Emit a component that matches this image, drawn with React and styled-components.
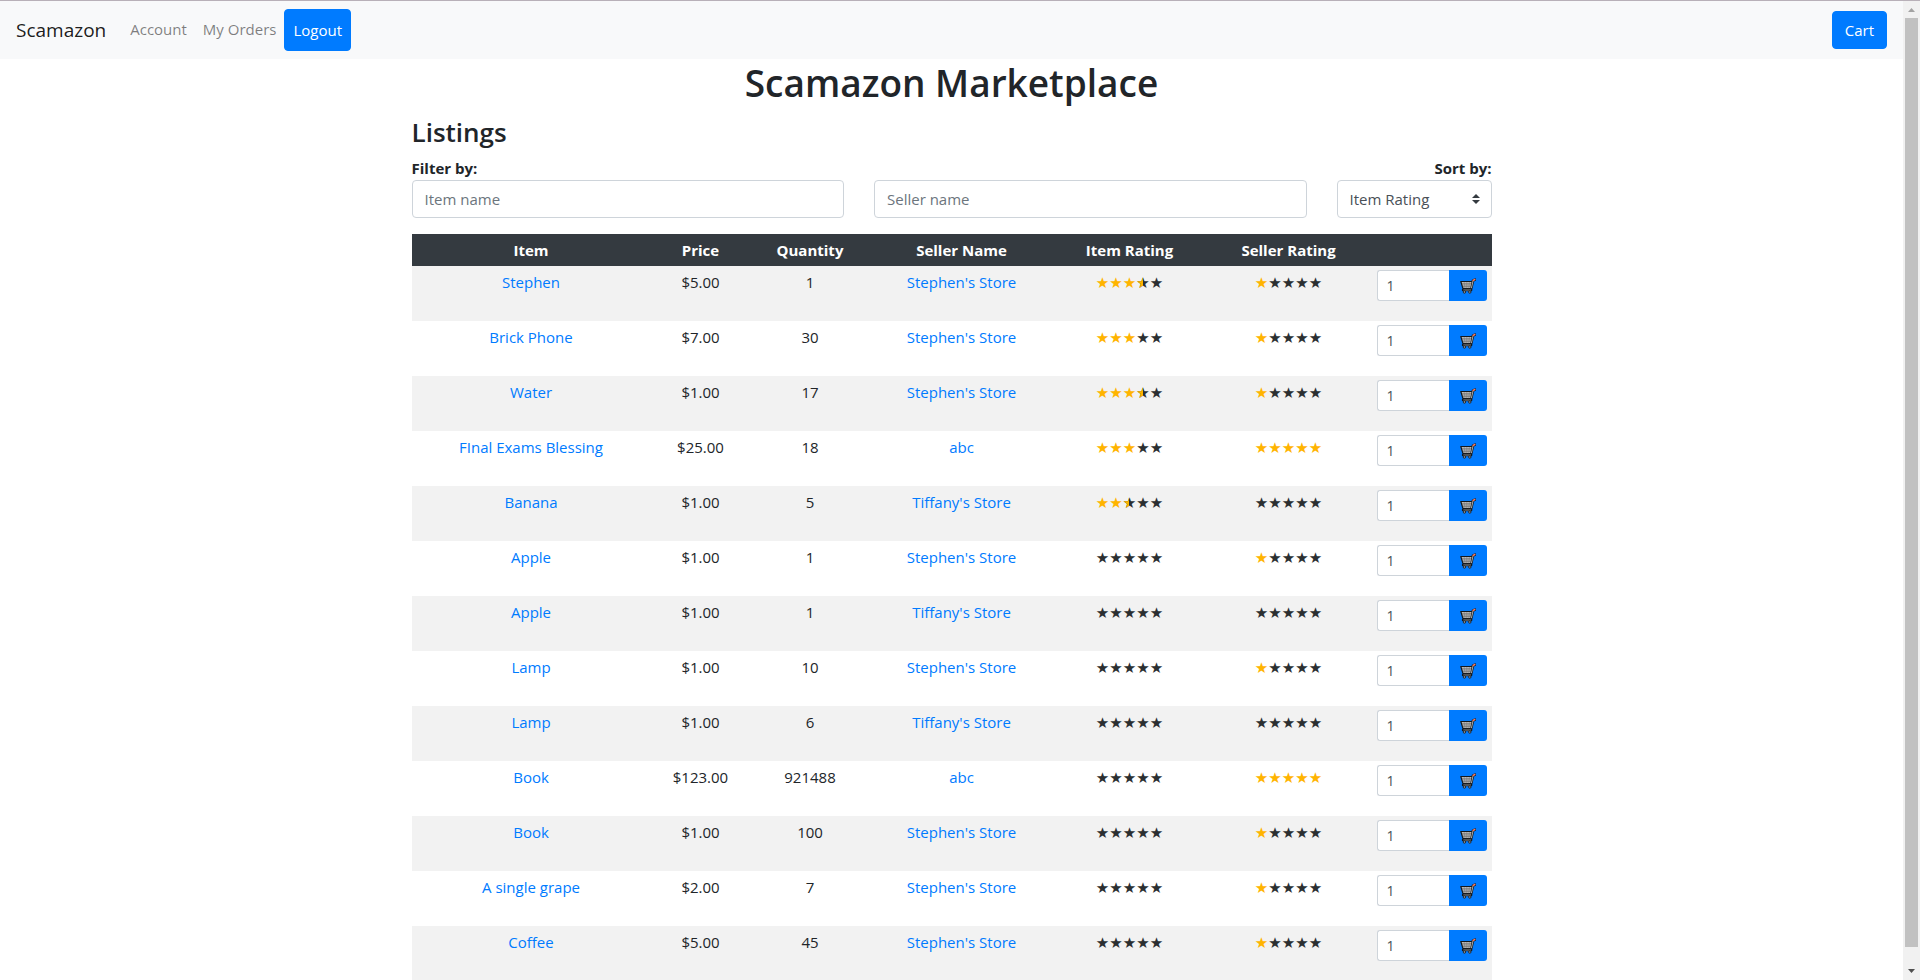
import React from 'react';
import styled, { createGlobalStyle } from 'styled-components';

const GlobalStyle = createGlobalStyle`
  *, *::before, *::after { box-sizing: border-box; }
  body {
    margin: 0;
    background: #fff;
    color: #212529;
    font-family: "Open Sans", "Noto Sans", sans-serif;
    font-size: 15px;
    line-height: 24px;
  }
  button, input, select { font: inherit; }
`;

const Shell = styled.div`
  display: flex;
  height: 100vh;
  border-top: 1px solid #b8b0b8;
`;

const Page = styled.div`
  flex: 1;
  min-width: 0;
  overflow-y: auto;
  scrollbar-width: none;
`;

const Scrollbar = styled.div`
  display: flex;
  flex-direction: column;
  align-items: center;
  width: 17px;
  background: #f1f1f1;
  svg { flex: none; display: block; }
`;

const Thumb = styled.div`
  width: 13px;
  flex: 1;
  margin-bottom: 16px;
  background: #c1c1c1;
`;

const Navbar = styled.nav`
  display: flex;
  align-items: center;
  height: 58px;
  padding: 8px 16px;
  background: #f8f9fa;
`;

const Brand = styled.a`
  margin-right: 16px;
  color: rgba(0, 0, 0, 0.9);
  font-size: 19px;
  line-height: 30px;
  text-decoration: none;
`;

const NavLinks = styled.div`
  display: flex;
  align-items: center;
  flex: 1;
`;

const NavLink = styled.a`
  padding: 7px 8px 9px;
  color: rgba(0, 0, 0, 0.5);
  text-decoration: none;
`;

const Button = styled.button`
  padding: ${(p) => (p.$tall ? '8px' : '6px 12px')};
  border: 1px solid #007bff;
  border-radius: 4px;
  background: #007bff;
  color: #fff;
`;

const Container = styled.main`
  max-width: 1110px;
  margin: 0 auto;
  padding: 0 15px 16px;
`;

const Title = styled.h1`
  margin: 0 0 8px;
  font-size: 37px;
  font-weight: 600;
  line-height: 48px;
  text-align: center;
`;

const Subtitle = styled.h2`
  margin: 0 0 7px;
  font-size: 26px;
  font-weight: 600;
  line-height: 34px;
`;

const Filters = styled.form`
  display: flex;
  align-items: flex-end;
  margin: 0 -15px 16px;
`;

const Field = styled.div`
  width: calc(100% * ${(p) => p.$span} / 12);
  padding: 0 15px;
`;

const Label = styled.label`
  display: block;
  font-weight: 700;
  text-align: ${(p) => p.$align || 'left'};
`;

const TextInput = styled.input`
  display: block;
  width: 100%;
  height: 38px;
  padding: 6px 12px;
  border: 1px solid #ced4da;
  border-radius: 4px;
  background: #fff;
  color: #495057;
  &::placeholder { color: #6c757d; opacity: 1; }
`;

const SelectBox = styled.div`
  position: relative;
  svg {
    position: absolute;
    top: 14px;
    right: 12px;
    pointer-events: none;
  }
`;

const Select = styled.select`
  display: block;
  width: 100%;
  height: 38px;
  padding: 6px 28px 6px 12px;
  border: 1px solid #ced4da;
  border-radius: 4px;
  background: #fff;
  color: #495057;
  appearance: none;
`;

const Table = styled.table`
  width: 100%;
  border-collapse: collapse;
  table-layout: fixed;
  text-align: center;
`;

const Col = styled.col`
  width: ${(p) => p.$w}px;
`;

const HeadCell = styled.th`
  height: 32px;
  padding: 4px 5px;
  background: #343a40;
  color: #fff;
  font-weight: 700;
`;

const Row = styled.tr`
  height: 55px;
  &:nth-child(odd) { background: #f2f2f2; }
`;

const Cell = styled.td`
  padding: 4px 5px;
  vertical-align: top;
`;

const ItemLink = styled.a`
  color: #007bff;
  text-decoration: none;
`;

const Stars = styled.span`
  font-family: "DejaVu Sans", sans-serif;
  font-size: 15px;
`;

const Star = styled.span`
  position: relative;
  color: ${(p) => (p.$fill === 1 ? '#ffb400' : '#2b2f31')};
  ${(p) => p.$fill === 0.5 && `
    &::before {
      content: '★';
      position: absolute;
      top: 0;
      left: 0;
      width: 50%;
      overflow: hidden;
      line-height: normal;
      color: #ffb400;
    }
  `}
`;

const AddGroup = styled.form`
  display: flex;
  height: 31px;
`;

const QtyInput = styled.input`
  flex: 1;
  min-width: 0;
  padding: 4px 9px;
  border: 1px solid #ced4da;
  border-right: 0;
  border-radius: 3px 0 0 3px;
  background: #fff;
  color: #495057;
  font-size: 14px;
`;

const AddButton = styled.button`
  display: flex;
  align-items: center;
  justify-content: center;
  width: 38px;
  padding: 0;
  border: 0;
  border-radius: 0 3px 3px 0;
  background: #007bff;
`;

const CartIcon = () => (
  <svg width="16" height="16" viewBox="0 0 16 16" aria-hidden="true">
    <path d="M11.2 10.5L13 2.6l2-1" fill="none" stroke="#14181c" strokeWidth="2.6" strokeLinejoin="round" strokeLinecap="round" />
    <path d="M.8 3.5h11.4l-1.4 7H3z" fill="#b9b9b9" stroke="#14181c" strokeWidth="1.2" strokeLinejoin="round" />
    <path d="M2 5.9h9.2M2.6 8.2h8.2" stroke="#5a5a5a" strokeWidth=".7" />
    <path d="M4.2 4.2l.8 6M6.8 4.2v6M9.4 4.2l-.6 6" stroke="#777" strokeWidth=".6" />
    <path d="M3 12h8.2" stroke="#14181c" strokeWidth="2.4" strokeLinecap="round" />
    <path d="M3.4 12h7.6" stroke="#8c8c8c" strokeWidth="1" />
    <circle cx="4.4" cy="14" r="1.2" fill="#aaa" stroke="#14181c" strokeWidth=".9" />
    <circle cx="9.8" cy="14" r="1.2" fill="#aaa" stroke="#14181c" strokeWidth=".9" />
    <path d="M11.4 10.2L13 3" stroke="#b9b9b9" strokeWidth=".9" />
    <path d="M13.2 2.4l1.6-.9" stroke="#f47a62" strokeWidth="1.6" strokeLinecap="round" />
  </svg>
);

const columns = [
  ['Item', 239],
  ['Price', 100],
  ['Quantity', 119],
  ['Seller Name', 184],
  ['Item Rating', 152],
  ['Seller Rating', 166],
  ['', 120],
];

const listings = [
  ['Stephen', '$5.00', 1, "Stephen's Store", 3.5, 1],
  ['Brick Phone', '$7.00', 30, "Stephen's Store", 3, 1],
  ['Water', '$1.00', 17, "Stephen's Store", 3.5, 1],
  ['FInal Exams Blessing', '$25.00', 18, 'abc', 3, 5],
  ['Banana', '$1.00', 5, "Tiffany's Store", 2.5, 0],
  ['Apple', '$1.00', 1, "Stephen's Store", 0, 1],
  ['Apple', '$1.00', 1, "Tiffany's Store", 0, 0],
  ['Lamp', '$1.00', 10, "Stephen's Store", 0, 1],
  ['Lamp', '$1.00', 6, "Tiffany's Store", 0, 0],
  ['Book', '$123.00', 921488, 'abc', 0, 5],
  ['Book', '$1.00', 100, "Stephen's Store", 0, 1],
  ['A single grape', '$2.00', 7, "Stephen's Store", 0, 1],
  ['Coffee', '$5.00', 45, "Stephen's Store", 0, 1],
];

const Rating = ({ value }) => (
  <Stars role="img" aria-label={`${value} out of 5`}>
    {[0, 1, 2, 3, 4].map((i) => (
      <Star key={i} $fill={Math.max(0, Math.min(1, value - i))}>★</Star>
    ))}
  </Stars>
);

export default function App() {
  return (
    <>
      <GlobalStyle />
      <Shell>
        <Page>
          <Navbar>
            <Brand href="#">Scamazon</Brand>
            <NavLinks>
              <NavLink href="#account">Account</NavLink>
              <NavLink href="#orders">My Orders</NavLink>
              <Button type="button" $tall>Logout</Button>
            </NavLinks>
            <Button type="button">Cart</Button>
          </Navbar>
          <Container>
            <Title>Scamazon Marketplace</Title>
            <Subtitle>Listings</Subtitle>
            <Filters>
              <Field $span={5}>
                <Label htmlFor="item-name">Filter by:</Label>
                <TextInput id="item-name" placeholder="Item name" />
              </Field>
              <Field $span={5}>
                <TextInput aria-label="Seller name" placeholder="Seller name" />
              </Field>
              <Field $span={2}>
                <Label htmlFor="sort" $align="right">Sort by:</Label>
                <SelectBox>
                  <Select id="sort" defaultValue="Item Rating">
                    <option>Item Rating</option>
                    <option>Seller Rating</option>
                    <option>Price</option>
                  </Select>
                  <svg width="8" height="10" viewBox="0 0 4 5" aria-hidden="true">
                    <path fill="#343a40" d="M2 0L0 2h4zm0 5L0 3h4z" />
                  </svg>
                </SelectBox>
              </Field>
            </Filters>
            <Table>
              <colgroup>
                {columns.map(([name, w]) => <Col key={name} $w={w} />)}
              </colgroup>
              <thead>
                <tr>
                  {columns.map(([name]) => <HeadCell key={name} scope="col">{name}</HeadCell>)}
                </tr>
              </thead>
              <tbody>
                {listings.map(([item, price, qty, seller, itemRating, sellerRating], i) => (
                  <Row key={i}>
                    <Cell><ItemLink href="#item">{item}</ItemLink></Cell>
                    <Cell>{price}</Cell>
                    <Cell>{qty}</Cell>
                    <Cell><ItemLink href="#seller">{seller}</ItemLink></Cell>
                    <Cell><Rating value={itemRating} /></Cell>
                    <Cell><Rating value={sellerRating} /></Cell>
                    <Cell>
                      <AddGroup>
                        <QtyInput aria-label={`Quantity of ${item}`} defaultValue="1" />
                        <AddButton type="button" aria-label={`Add ${item} to cart`}><CartIcon /></AddButton>
                      </AddGroup>
                    </Cell>
                  </Row>
                ))}
              </tbody>
            </Table>
          </Container>
        </Page>
        <Scrollbar aria-hidden="true">
          <svg width="17" height="17"><path d="M5 11l3.5-4 3.5 4z" fill="#a3a3a3" /></svg>
          <Thumb />
          <svg width="17" height="17"><path d="M5 6l3.5 4L12 6z" fill="#505050" /></svg>
        </Scrollbar>
      </Shell>
    </>
  );
}
